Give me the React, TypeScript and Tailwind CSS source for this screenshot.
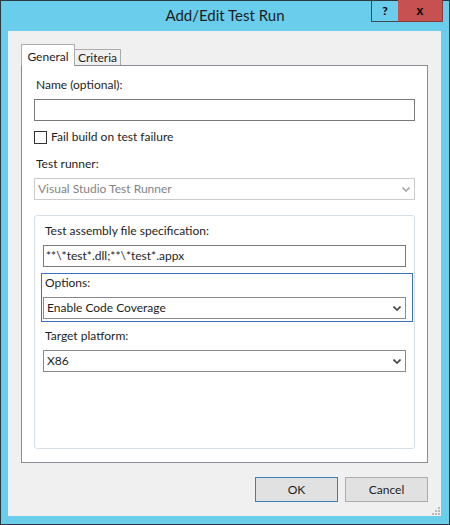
import React from "react";

const font = { fontFamily: '"Segoe UI", Lato, "Noto Sans", sans-serif' };

// Small chevron used by the combo boxes.
const Chevron = ({ disabled }: { disabled?: boolean }) => (
  <svg width="8" height="5" viewBox="0 0 8 5" className="shrink-0">
    <path
      d="M0.5 0.5 L4 4 L7.5 0.5"
      fill="none"
      stroke={disabled ? "#a8a8a8" : "#3f3f3f"}
      strokeWidth="1.6"
    />
  </svg>
);

const Label = ({ children }: { children: React.ReactNode }) => (
  <div className="pl-[2px] text-[12px] leading-[16px] text-[#1e1e1e]">{children}</div>
);

const TextBox = ({ value }: { value?: string }) => (
  <div className="mt-[6px] flex h-[22px] items-center border border-[#7a7a7a] bg-white px-[2px] text-[12px] text-[#1e1e1e]">
    {value}
  </div>
);

const Combo = ({ value, disabled }: { value: string; disabled?: boolean }) => (
  <div
    className={
      disabled
        ? "mt-[6px] flex h-[22px] items-center justify-between border border-[#cccccc] bg-white pl-[3px] pr-[4px] text-[12px] text-[#838383]"
        : "mt-[6px] flex h-[22px] items-center justify-between border border-[#8a8a8a] bg-white pl-[3px] pr-[4px] text-[12px] text-[#1e1e1e]"
    }
  >
    <span>{value}</span>
    <Chevron disabled={disabled} />
  </div>
);

export default function App() {
  return (
    <div
      className="relative flex h-[525px] w-[450px] flex-col border border-[#2b3a40] bg-[#6bcdec]"
      style={font}
    >
      {/* title bar */}
      <div className="flex h-[30px] shrink-0 items-center justify-center pb-[1px] text-[15px] text-[#1e1e1e]">
        Add/Edit Test Run
      </div>
      <div className="absolute right-[6px] top-[-1px] flex h-[22px]">
        <div className="flex w-[27px] items-center justify-center border-b border-l border-[#3d4c52] text-[12px] font-bold text-black">
          ?
        </div>
        <div className="flex w-[45px] items-center justify-center border-b border-r border-[#8b3a3a] bg-[#c75050] text-[13px] font-bold text-black">
          x
        </div>
      </div>

      {/* client area */}
      <div className="relative ml-[7px] flex h-[485px] w-[433px] flex-col bg-[#f0f0f0] pl-[13px] pt-[13px]">
        {/* tab headers */}
        <div className="relative z-10 -mb-px flex h-[22px] text-[12px] text-[#1e1e1e]">
          <div className="flex h-[22px] w-[54px] items-start justify-center border border-b-0 border-[#acacac] bg-white pt-[3px]">
            General
          </div>
          <div className="mt-[5px] flex h-[16px] w-[46px] items-center justify-center border border-b-0 border-l-0 border-[#acacac] bg-[#f0f0f0]">
            Criteria
          </div>
        </div>

        {/* tab page */}
        <div className="flex h-[398px] w-[407px] flex-col border border-[#898c95] bg-white px-[12px] pt-[11px]">
          <Label>Name (optional):</Label>
          <TextBox />

          <div className="mt-[8px] flex h-[16px] items-center gap-[4px] text-[12px] text-[#1e1e1e]">
            <div className="h-[13px] w-[13px] border border-[#333333] bg-white" />
            <span>Fail build on test failure</span>
          </div>

          <div className="mt-[11px]">
            <Label>Test runner:</Label>
          </div>
          <Combo value="Visual Studio Test Runner" disabled />

          {/* group box */}
          <div className="mt-[15px] flex h-[234px] flex-col rounded-[3px] border border-[#d5dfe5] px-[8px] pt-[7px]">
            <Label>Test assembly file specification:</Label>
            <TextBox value={"**\\*test*.dll;**\\*test*.appx"} />

            <div className="-ml-[2px] -mr-[7px] mt-[6px] border border-[#3c6fc4] pb-[2px] pl-[1px] pr-[6px] pt-[1px]">
              <Label>Options:</Label>
              <Combo value="Enable Code Coverage" />
            </div>

            <div className="mt-[6px]">
              <Label>Target platform:</Label>
            </div>
            <Combo value="X86" />
          </div>
        </div>

        {/* buttons */}
        <div className="mt-[14px] flex w-[407px] justify-end gap-[7px] text-[12px] text-[#1e1e1e]">
          <button className="flex h-[25px] w-[83px] items-center justify-center border border-[#3c7fb1] bg-[#e1e1e1]">
            OK
          </button>
          <button className="flex h-[25px] w-[83px] items-center justify-center border border-[#adadad] bg-[#e1e1e1]">
            Cancel
          </button>
        </div>

        {/* size grip */}
        <svg width="9" height="9" viewBox="0 0 9 9" className="absolute bottom-[1px] right-[1px]">
          {[
            [7, 1],
            [7, 4],
            [4, 4],
            [7, 7],
            [4, 7],
            [1, 7]
          ].map(([x, y], i) => (
            <rect key={i} x={x} y={y} width="2" height="2" fill="#b8b8b8" />
          ))}
        </svg>
      </div>
    </div>
  );
}
